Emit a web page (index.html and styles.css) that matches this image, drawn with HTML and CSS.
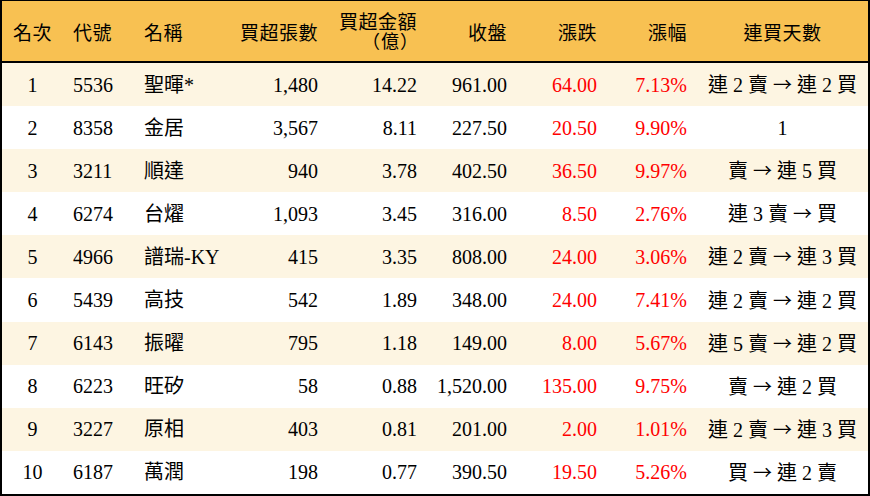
FILE: index.html
```html
<!DOCTYPE html>
<html lang="zh-Hant">
<head>
<meta charset="utf-8">
<link rel="stylesheet" href="styles.css">
</head>
<body>
<div class="table">
  <div class="row head">
    <div class="c center">名次</div>
    <div class="c left">代號</div>
    <div class="c left">名稱</div>
    <div class="c right">買超張數</div>
    <div class="c right two"><span class="line">買超金額</span><span class="line paren">（億）</span></div>
    <div class="c right">收盤</div>
    <div class="c right">漲跌</div>
    <div class="c right">漲幅</div>
    <div class="c center">連買天數</div>
  </div>
  <div class="row odd">
    <div class="c center">1</div><div class="c left">5536</div><div class="c left">聖暉*</div><div class="c right">1,480</div><div class="c right">14.22</div><div class="c right">961.00</div><div class="c right red">64.00</div><div class="c right red">7.13%</div><div class="c center">連 2 賣 <span class="arr">→</span> 連 2 買</div>
  </div>
  <div class="row">
    <div class="c center">2</div><div class="c left">8358</div><div class="c left">金居</div><div class="c right">3,567</div><div class="c right">8.11</div><div class="c right">227.50</div><div class="c right red">20.50</div><div class="c right red">9.90%</div><div class="c center">1</div>
  </div>
  <div class="row odd">
    <div class="c center">3</div><div class="c left">3211</div><div class="c left">順達</div><div class="c right">940</div><div class="c right">3.78</div><div class="c right">402.50</div><div class="c right red">36.50</div><div class="c right red">9.97%</div><div class="c center">賣 <span class="arr">→</span> 連 5 買</div>
  </div>
  <div class="row">
    <div class="c center">4</div><div class="c left">6274</div><div class="c left">台燿</div><div class="c right">1,093</div><div class="c right">3.45</div><div class="c right">316.00</div><div class="c right red">8.50</div><div class="c right red">2.76%</div><div class="c center">連 3 賣 <span class="arr">→</span> 買</div>
  </div>
  <div class="row odd">
    <div class="c center">5</div><div class="c left">4966</div><div class="c left">譜瑞-KY</div><div class="c right">415</div><div class="c right">3.35</div><div class="c right">808.00</div><div class="c right red">24.00</div><div class="c right red">3.06%</div><div class="c center">連 2 賣 <span class="arr">→</span> 連 3 買</div>
  </div>
  <div class="row">
    <div class="c center">6</div><div class="c left">5439</div><div class="c left">高技</div><div class="c right">542</div><div class="c right">1.89</div><div class="c right">348.00</div><div class="c right red">24.00</div><div class="c right red">7.41%</div><div class="c center">連 2 賣 <span class="arr">→</span> 連 2 買</div>
  </div>
  <div class="row odd">
    <div class="c center">7</div><div class="c left">6143</div><div class="c left">振曜</div><div class="c right">795</div><div class="c right">1.18</div><div class="c right">149.00</div><div class="c right red">8.00</div><div class="c right red">5.67%</div><div class="c center">連 5 賣 <span class="arr">→</span> 連 2 買</div>
  </div>
  <div class="row">
    <div class="c center">8</div><div class="c left">6223</div><div class="c left">旺矽</div><div class="c right">58</div><div class="c right">0.88</div><div class="c right">1,520.00</div><div class="c right red">135.00</div><div class="c right red">9.75%</div><div class="c center">賣 <span class="arr">→</span> 連 2 買</div>
  </div>
  <div class="row odd">
    <div class="c center">9</div><div class="c left">3227</div><div class="c left">原相</div><div class="c right">403</div><div class="c right">0.81</div><div class="c right">201.00</div><div class="c right red">2.00</div><div class="c right red">1.01%</div><div class="c center">連 2 賣 <span class="arr">→</span> 連 3 買</div>
  </div>
  <div class="row">
    <div class="c center">10</div><div class="c left">6187</div><div class="c left">萬潤</div><div class="c right">198</div><div class="c right">0.77</div><div class="c right">390.50</div><div class="c right red">19.50</div><div class="c right red">5.26%</div><div class="c center">買 <span class="arr">→</span> 連 2 賣</div>
  </div>
</div>
</body>
</html>
```

FILE: styles.css
```css
html, body {
  margin: 0;
  padding: 0;
  background: #ffffff;
}

.table {
  width: 870px;
  height: 496px;
  box-sizing: border-box;
  border: 2px solid #000;
  border-top-width: 1px;
  font-family: "Liberation Serif", "Noto Sans CJK TC", serif;
  font-size: 20px;
  color: #000;
  background: #ffffff;
  overflow: hidden;
}

.row {
  display: grid;
  grid-template-columns: 61px 71px 94px 100px 99px 90px 90px 90px 171px;
  height: 43.1px;
  align-items: center;
  background: #ffffff;
}

.row.odd {
  background: #fdf5e2;
}

.row.head {
  height: 60px;
  background: #f8c152;
  border-bottom: 2px solid #000;
}

.head .c {
  font-family: "Noto Sans CJK TC", sans-serif;
  font-size: 19px;
  letter-spacing: 0.5px;
  padding-top: 1px;
}

.head .two {
  display: flex;
  flex-direction: column;
  align-items: flex-end;
  gap: 0;
  padding-top: 0;
}

.head .two .line {
  display: block;
  line-height: 19px;
  height: 20px;
}

.head .two .paren {
  font-size: 18px;
  letter-spacing: 1px;
  margin-right: -2px;
}

.c {
  padding: 0 10px;
  white-space: nowrap;
  line-height: 24px;
}

.arr {
  font-family: "Noto Sans CJK TC", sans-serif;
  font-size: 19px;
}

.left { text-align: left; }
.right { text-align: right; }
.center { text-align: center; }

.red { color: #ff0000; }
```
